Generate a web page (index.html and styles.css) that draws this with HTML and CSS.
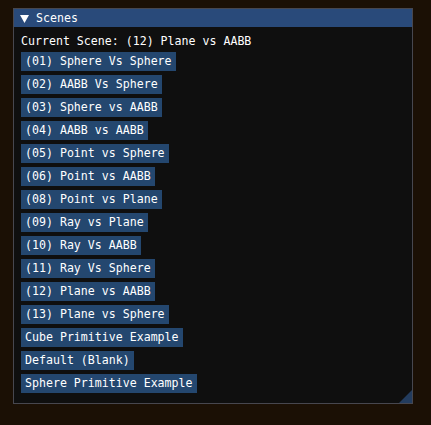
FILE: index.html
```html
<!DOCTYPE html>
<html>
<head>
<meta charset="utf-8">
<link rel="stylesheet" href="styles.css">
</head>
<body>
<div class="window">
  <div class="title">
    <svg class="arrow" width="9" height="8" viewBox="0 0 9 8"><polygon points="0,0 9,0 4.5,8" fill="#fff"/></svg>
    <span>Scenes</span>
  </div>
  <div class="content">
    <div class="label">Current Scene: (12) Plane vs AABB</div>
    <div class="btn">(01) Sphere Vs Sphere</div>
    <div class="btn">(02) AABB Vs Sphere</div>
    <div class="btn">(03) Sphere vs AABB</div>
    <div class="btn">(04) AABB vs AABB</div>
    <div class="btn">(05) Point vs Sphere</div>
    <div class="btn">(06) Point vs AABB</div>
    <div class="btn">(08) Point vs Plane</div>
    <div class="btn">(09) Ray vs Plane</div>
    <div class="btn">(10) Ray Vs AABB</div>
    <div class="btn">(11) Ray Vs Sphere</div>
    <div class="btn">(12) Plane vs AABB</div>
    <div class="btn">(13) Plane vs Sphere</div>
    <div class="btn">Cube Primitive Example</div>
    <div class="btn">Default (Blank)</div>
    <div class="btn">Sphere Primitive Example</div>
  </div>
  <svg class="grip" width="13" height="13" viewBox="0 0 13 13"><polygon points="13,0 13,13 0,13" fill="#233c5e"/></svg>
</div>
</body>
</html>
```
FILE: styles.css
```css
html, body {
  margin: 0;
  padding: 0;
  background: #1b1005;
}
body {
  padding: 8px 0 0 13px;
  font-family: "DejaVu Sans Mono", "Liberation Mono", monospace;
  font-size: 11.6px;
  color: #ffffff;
}
.window {
  position: relative;
  box-sizing: border-box;
  width: 400px;
  height: 396px;
  border: 1px solid #47474f;
  background: #0f0f0f;
}
.title {
  height: 18px;
  background: #294a7a;
  display: flex;
  align-items: center;
  padding-left: 6px;
  line-height: 13px;
}
.arrow {
  margin-right: 7px;
  margin-top: 1px;
}
.content {
  display: flex;
  flex-direction: column;
  align-items: flex-start;
  gap: 4px;
  padding: 8px 7px 0 7px;
}
.label {
  line-height: 13px;
  white-space: pre;
}
.btn {
  background: #24476f;
  padding: 3px 4px;
  line-height: 13px;
  white-space: pre;
}
.grip {
  position: absolute;
  right: 0;
  bottom: 0;
}
```
